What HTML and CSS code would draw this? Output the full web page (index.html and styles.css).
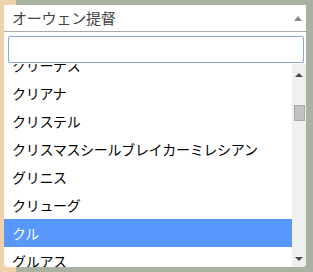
FILE: index.html
```html
<!DOCTYPE html>
<html lang="ja">
<head>
    <meta charset="UTF-8">
    <meta name="viewport" content="width=device-width, initial-scale=1.0">
    <title>Select</title>
    <link rel="stylesheet" href="styles.css">
</head>
<body>

    <div class="select">
        <div class="select-choice">
            <span class="choice-text">オーウェン提督</span>
            <span class="choice-arrow"></span>
        </div>

        <div class="select-drop">
            <div class="search-wrap">
                <input class="search" type="text">
            </div>

            <div class="results">
                <ul class="result-list">
                    <li>クリーナス</li>
                    <li>クリアナ</li>
                    <li>クリステル</li>
                    <li>クリスマスシールブレイカーミレシアン</li>
                    <li>グリニス</li>
                    <li>クリューグ</li>
                    <li class="active">クル</li>
                    <li>グルアス</li>
                </ul>
                <div class="scrollbar">
                    <div class="scroll-btn up"><span class="tri-up"></span></div>
                    <div class="scroll-thumb"></div>
                    <div class="scroll-space"></div>
                    <div class="scroll-btn down"><span class="tri-down"></span></div>
                </div>
            </div>
        </div>
    </div>

</body>
</html>
```

FILE: styles.css
```css
html, body {
    margin: 0;
    padding: 0;
    height: 100%;
    overflow: hidden;
}

body {
    background: linear-gradient(to right, #efd2ab 0, #efd2ab 16px, #a9b1a2 16px);
    padding: 5px 0 0 4px;
    box-sizing: border-box;
    font-family: "Noto Sans CJK JP", "Noto Sans", sans-serif;
}

body::before {
    content: "";
    position: fixed;
    left: 0;
    top: 0;
    bottom: 0;
    width: 4px;
    background: #efd2ab;
}

.select {
    width: 302px;
    height: 262px;
    background: #fff;
    border-radius: 0 0 4px 4px;
    overflow: hidden;
    display: flex;
    flex-direction: column;
}

.select-choice {
    height: 26px;
    border-bottom: 1px solid #aaa;
    display: flex;
    align-items: center;
    justify-content: space-between;
    padding: 0 4px 0 8px;
}

.choice-text {
    font-size: 15px;
    color: #444;
    line-height: 26px;
    letter-spacing: -0.2px;
}

.choice-arrow {
    width: 0;
    height: 0;
    border-left: 4px solid transparent;
    border-right: 4px solid transparent;
    border-bottom: 5px solid #888;
    margin-top: 1px;
}

.select-drop {
    flex: 1;
    display: flex;
    flex-direction: column;
    min-height: 0;
}

.search-wrap {
    padding: 4px 2px 1px 4px;
}

.search {
    display: block;
    width: 296px;
    height: 27px;
    box-sizing: border-box;
    margin: 0;
    border: 1px solid #86a8dc;
    border-radius: 2px;
    outline: none;
    background: #fff;
}

.results {
    flex: 1;
    display: flex;
    min-height: 0;
    overflow: hidden;
}

.result-list {
    flex: 1;
    list-style: none;
    margin: -13px 0 0 0;
    padding: 0;
}

.result-list li {
    height: 28px;
    line-height: 28px;
    padding-left: 8px;
    font-size: 14px;
    letter-spacing: -0.3px;
    color: #000;
    white-space: nowrap;
}

.result-list li.active {
    background: #5897fb;
    color: #fff;
}

.scrollbar {
    width: 14px;
    background: #f0f0f0;
    display: flex;
    flex-direction: column;
    align-items: center;
}

.scroll-btn {
    display: flex;
    justify-content: center;
}

.scroll-btn.up {
    padding-top: 9px;
    height: 15px;
}

.scroll-btn.down {
    padding-bottom: 6px;
}

.tri-up {
    width: 0;
    height: 0;
    border-left: 4px solid transparent;
    border-right: 4px solid transparent;
    border-bottom: 4px solid #4a4a4a;
}

.tri-down {
    width: 0;
    height: 0;
    border-left: 4px solid transparent;
    border-right: 4px solid transparent;
    border-top: 4px solid #4a4a4a;
}

.scroll-thumb {
    width: 11px;
    height: 16px;
    box-sizing: border-box;
    margin-top: 17px;
    margin-left: 1px;
    background: #c2c2c2;
    border: 1px solid #a9a9a9;
}

.scroll-space {
    flex: 1;
}
```
